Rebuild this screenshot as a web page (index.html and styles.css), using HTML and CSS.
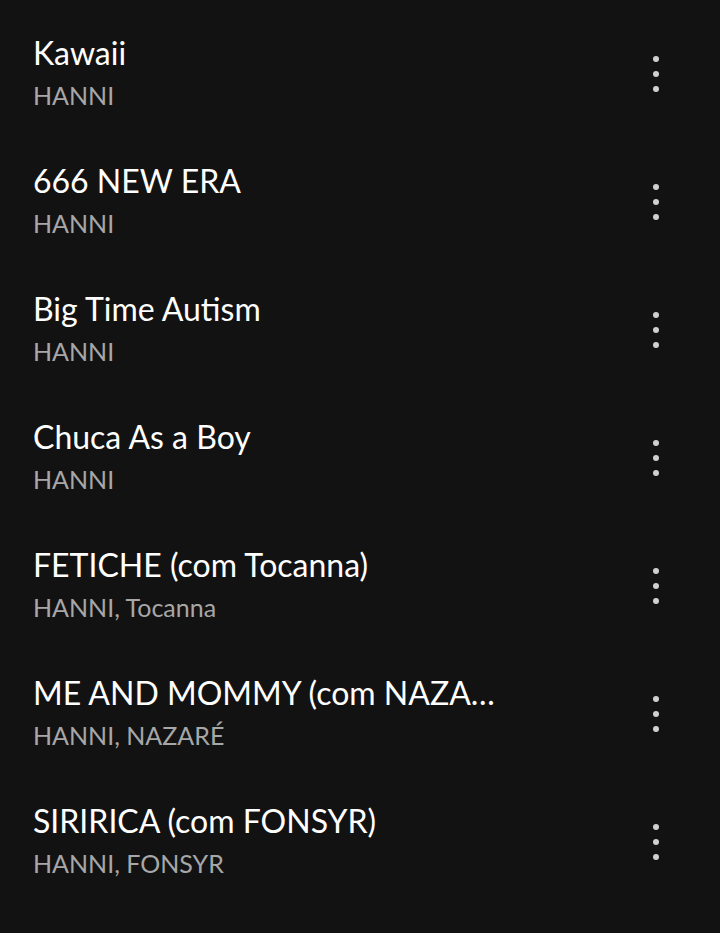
FILE: index.html
```html
<!DOCTYPE html>
<html lang="pt">
<head>
<meta charset="utf-8">
<link rel="stylesheet" href="styles.css">
</head>
<body>
<ul class="tracks">
  <li class="track"><div class="info"><div class="title">Kawaii</div><div class="artist">HANNI</div></div><button class="more" aria-label="Mais opções"><span></span><span></span><span></span></button></li>
  <li class="track"><div class="info"><div class="title">666 NEW ERA</div><div class="artist">HANNI</div></div><button class="more" aria-label="Mais opções"><span></span><span></span><span></span></button></li>
  <li class="track"><div class="info"><div class="title">Big Time Autism</div><div class="artist">HANNI</div></div><button class="more" aria-label="Mais opções"><span></span><span></span><span></span></button></li>
  <li class="track"><div class="info"><div class="title">Chuca As a Boy</div><div class="artist">HANNI</div></div><button class="more" aria-label="Mais opções"><span></span><span></span><span></span></button></li>
  <li class="track"><div class="info"><div class="title">FETICHE (com Tocanna)</div><div class="artist">HANNI, Tocanna</div></div><button class="more" aria-label="Mais opções"><span></span><span></span><span></span></button></li>
  <li class="track"><div class="info"><div class="title">ME AND MOMMY (com NAZA…</div><div class="artist">HANNI, NAZARÉ</div></div><button class="more" aria-label="Mais opções"><span></span><span></span><span></span></button></li>
  <li class="track"><div class="info"><div class="title">SIRIRICA (com FONSYR)</div><div class="artist">HANNI, FONSYR</div></div><button class="more" aria-label="Mais opções"><span></span><span></span><span></span></button></li>
</ul>
</body>
</html>
```
FILE: styles.css
```css
html, body {
  margin: 0;
  padding: 0;
  background: #121212;
  height: 100%;
}
body {
  font-family: "Lato", "Noto Sans", sans-serif;
  overflow: hidden;
}
.tracks {
  list-style: none;
  margin: 0;
  padding: 8px 0 0 0;
}
.track {
  height: 128px;
  display: flex;
  align-items: center;
  padding: 0 24px 0 33px;
}
.info {
  flex: 1;
  min-width: 0;
  display: flex;
  flex-direction: column;
}
.title {
  color: #ffffff;
  font-size: 32px;
  line-height: 40px;
  white-space: nowrap;
}
.artist {
  color: #a7a7a7;
  font-size: 25px;
  line-height: 32px;
  margin-top: 6px;
  white-space: nowrap;
}
.more {
  width: 48px;
  height: 48px;
  background: none;
  border: 0;
  padding: 0;
  margin-top: 4px;
  display: flex;
  flex-direction: column;
  align-items: center;
  justify-content: center;
  gap: 9px;
  margin-right: 16px;
}
.more span {
  width: 6px;
  height: 6px;
  border-radius: 50%;
  background: #d0d0d0;
}
```
